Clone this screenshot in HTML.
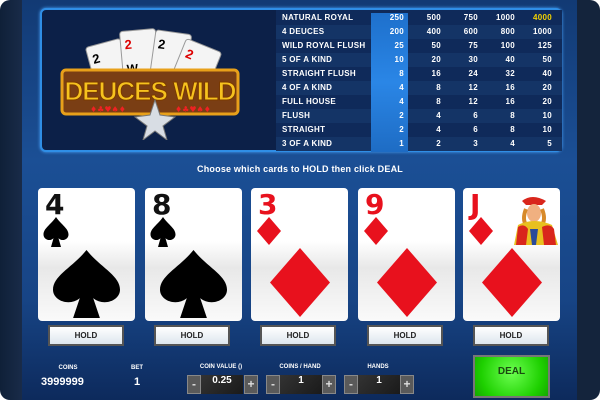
<!DOCTYPE html>
<html><head><meta charset="utf-8"><style>
*{margin:0;padding:0;box-sizing:border-box}
body{width:600px;height:400px;overflow:hidden;background:#fff;font-family:"Liberation Sans",sans-serif;font-weight:bold;color:#fff}
#root{position:absolute;left:0;top:0;width:600px;height:400px;border-radius:10px;overflow:hidden;background:linear-gradient(90deg,#0f2038,#1a2c4a 4%,#14243c)}
#main{position:absolute;left:22px;top:0;width:555px;height:400px;background:linear-gradient(180deg,#123a74 0%,#1b4f95 40%,#174485 75%,#0d2a5c 100%)}
#top{position:absolute;left:40px;top:8px;width:522px;height:144px;border:2px solid #2f8ee6;border-radius:6px;background:#0c2048;box-shadow:0 0 3px #4aa6ff}
#pt{position:absolute;left:276px;top:10px;width:286px;height:140px;background:#0f2a5a}
.row{position:absolute;left:0;width:286px;height:14px;font-size:8px;line-height:14px;letter-spacing:0.3px}
.row span{position:absolute;top:0;z-index:2}
.row .l{left:6px}
.hl{position:absolute;left:95px;top:3px;width:37px;height:139px;background:linear-gradient(180deg,#1e70cc,#2a86e6 50%,#1e6cc4);z-index:1}
.n{text-align:right;width:30px}
.card{position:absolute;top:188px;width:97px;height:133px;background:linear-gradient(180deg,#fff 40%,#e8e8e8 60%,#fafafa);border-radius:4px}
.rk{position:absolute;left:7px;top:0px;font-size:28px;font-family:"DejaVu Sans",sans-serif;font-weight:bold;color:#111}
.hold{position:absolute;top:325px;width:76px;height:21px;background:linear-gradient(180deg,#fff,#dde6ee);border:2px solid #555;color:#222;font-size:8px;text-align:center;line-height:17px}
.lbl{position:absolute;font-size:6px;text-align:center}
.btn{position:absolute;top:375px;width:14px;height:19px;background:#5a5a5a;border:1px solid #888;color:#ddd;font-size:12px;text-align:center;line-height:17px}
.box{position:absolute;top:375px;width:42px;height:19px;background:linear-gradient(135deg,#333,#1a1a1a);font-size:10px;text-align:center;line-height:12px}
</style></head><body><div id="root">
<div id="main"></div>
<div id="top"></div>
<svg style="position:absolute;left:60px;top:20px" width="180" height="120" viewBox="0 0 180 120">
<g transform="rotate(-15 50 50)"><rect x="32" y="22" width="36" height="48" rx="3" fill="#f4f4f4" stroke="#999"/><text x="36" y="40" font-size="13" font-family="Liberation Sans" font-weight="bold">2</text></g>
<g transform="rotate(-5 80 40)"><rect x="62" y="10" width="36" height="50" rx="3" fill="#f4f4f4" stroke="#999"/><text x="66" y="28" font-size="13" fill="#d00" font-family="Liberation Sans" font-weight="bold">2</text><text x="66" y="52" font-size="12" font-family="Liberation Sans" font-weight="bold">W</text></g>
<g transform="rotate(8 110 40)"><rect x="92" y="12" width="36" height="50" rx="3" fill="#f4f4f4" stroke="#999"/><text x="96" y="30" font-size="13" font-family="Liberation Sans" font-weight="bold">2</text></g>
<g transform="rotate(22 130 50)"><rect x="115" y="22" width="38" height="50" rx="3" fill="#f4f4f4" stroke="#999"/><text x="120" y="40" font-size="13" fill="#d00" font-family="Liberation Sans" font-weight="bold">2</text><text x="118" y="62" font-size="11" font-family="Liberation Sans" font-weight="bold">WILD</text></g>
<rect x="2" y="50" width="176" height="44" rx="4" fill="#7a3e14" stroke="#e8a01a" stroke-width="3"/>
<text x="90" y="80" text-anchor="middle" font-size="26" fill="#f6c21e" stroke="#7a3a00" stroke-width="1" font-family="Liberation Sans" font-weight="bold" letter-spacing="-1">DEUCES WILD</text>
<text x="30" y="92" font-size="8" fill="#e22" font-family="DejaVu Sans">♦♣♥♠♦</text><text x="115" y="92" font-size="8" fill="#e22" font-family="DejaVu Sans">♦♣♥♠♦</text>
<polygon points="95,80 100,95 115,97 103,106 107,120 95,111 83,120 87,106 75,97 90,95" fill="#d8dde4" stroke="#777"/>
</svg>
<div id="pt">
<div class="hl"></div>
<div class="row" style="top:1px"><span class="l">NATURAL ROYAL</span><span class="n" style="left:98px">250</span><span class="n" style="left:135px">500</span><span class="n" style="left:172px">750</span><span class="n" style="left:209px">1000</span><span class="n" style="left:246px;color:#f2d200">4000</span></div>
<div class="row" style="top:15px;background:#143466"><span class="l">4 DEUCES</span><span class="n" style="left:98px">200</span><span class="n" style="left:135px">400</span><span class="n" style="left:172px">600</span><span class="n" style="left:209px">800</span><span class="n" style="left:246px">1000</span></div>
<div class="row" style="top:29px"><span class="l">WILD ROYAL FLUSH</span><span class="n" style="left:98px">25</span><span class="n" style="left:135px">50</span><span class="n" style="left:172px">75</span><span class="n" style="left:209px">100</span><span class="n" style="left:246px">125</span></div>
<div class="row" style="top:43px;background:#143466"><span class="l">5 OF A KIND</span><span class="n" style="left:98px">10</span><span class="n" style="left:135px">20</span><span class="n" style="left:172px">30</span><span class="n" style="left:209px">40</span><span class="n" style="left:246px">50</span></div>
<div class="row" style="top:57px"><span class="l">STRAIGHT FLUSH</span><span class="n" style="left:98px">8</span><span class="n" style="left:135px">16</span><span class="n" style="left:172px">24</span><span class="n" style="left:209px">32</span><span class="n" style="left:246px">40</span></div>
<div class="row" style="top:71px;background:#143466"><span class="l">4 OF A KIND</span><span class="n" style="left:98px">4</span><span class="n" style="left:135px">8</span><span class="n" style="left:172px">12</span><span class="n" style="left:209px">16</span><span class="n" style="left:246px">20</span></div>
<div class="row" style="top:85px"><span class="l">FULL HOUSE</span><span class="n" style="left:98px">4</span><span class="n" style="left:135px">8</span><span class="n" style="left:172px">12</span><span class="n" style="left:209px">16</span><span class="n" style="left:246px">20</span></div>
<div class="row" style="top:99px;background:#143466"><span class="l">FLUSH</span><span class="n" style="left:98px">2</span><span class="n" style="left:135px">4</span><span class="n" style="left:172px">6</span><span class="n" style="left:209px">8</span><span class="n" style="left:246px">10</span></div>
<div class="row" style="top:113px"><span class="l">STRAIGHT</span><span class="n" style="left:98px">2</span><span class="n" style="left:135px">4</span><span class="n" style="left:172px">6</span><span class="n" style="left:209px">8</span><span class="n" style="left:246px">10</span></div>
<div class="row" style="top:127px;background:#143466"><span class="l">3 OF A KIND</span><span class="n" style="left:98px">1</span><span class="n" style="left:135px">2</span><span class="n" style="left:172px">3</span><span class="n" style="left:209px">4</span><span class="n" style="left:246px">5</span></div>
</div>
<div style="position:absolute;left:0;width:600px;top:164px;text-align:center;font-size:9px;letter-spacing:0.2px">Choose which cards to HOLD then click DEAL</div>

<div class="card" style="left:38px"><div class="rk">4</div><svg style="position:absolute;left:5px;top:29px" width="26" height="30" viewBox="0 0 20 24"><path d="M10 0C6 6 0 9 0 14c0 4 5 6 8 3l-2 7h8l-2-7c3 3 8 1 8-3 0-5-6-8-10-14z"/></svg><svg style="position:absolute;left:15px;top:62px" width="67" height="68" viewBox="0 0 20 24" preserveAspectRatio="none"><path d="M10 0C6 6 0 9 0 14c0 4 5 6 8 3l-2 7h8l-2-7c3 3 8 1 8-3 0-5-6-8-10-14z"/></svg></div>
<div class="card" style="left:145px"><div class="rk">8</div><svg style="position:absolute;left:5px;top:29px" width="26" height="30" viewBox="0 0 20 24"><path d="M10 0C6 6 0 9 0 14c0 4 5 6 8 3l-2 7h8l-2-7c3 3 8 1 8-3 0-5-6-8-10-14z"/></svg><svg style="position:absolute;left:15px;top:62px" width="67" height="68" viewBox="0 0 20 24" preserveAspectRatio="none"><path d="M10 0C6 6 0 9 0 14c0 4 5 6 8 3l-2 7h8l-2-7c3 3 8 1 8-3 0-5-6-8-10-14z"/></svg></div>
<div class="card" style="left:251px"><div class="rk" style="color:#e8111d">3</div><svg style="position:absolute;left:6px;top:29px" width="24" height="28" viewBox="0 0 20 24" preserveAspectRatio="none"><path d="M10 0L20 12 10 24 0 12z" fill="#e8111d"/></svg><svg style="position:absolute;left:19px;top:60px" width="60" height="69" viewBox="0 0 20 24" preserveAspectRatio="none"><path d="M10 0L20 12 10 24 0 12z" fill="#e8111d"/></svg></div>
<div class="card" style="left:358px"><div class="rk" style="color:#e8111d">9</div><svg style="position:absolute;left:6px;top:29px" width="24" height="28" viewBox="0 0 20 24" preserveAspectRatio="none"><path d="M10 0L20 12 10 24 0 12z" fill="#e8111d"/></svg><svg style="position:absolute;left:19px;top:60px" width="60" height="69" viewBox="0 0 20 24" preserveAspectRatio="none"><path d="M10 0L20 12 10 24 0 12z" fill="#e8111d"/></svg></div>
<div class="card" style="left:463px"><div class="rk" style="color:#e8111d">J</div><svg style="position:absolute;left:6px;top:29px" width="24" height="28" viewBox="0 0 20 24" preserveAspectRatio="none"><path d="M10 0L20 12 10 24 0 12z" fill="#e8111d"/></svg><svg style="position:absolute;left:19px;top:60px" width="60" height="69" viewBox="0 0 20 24" preserveAspectRatio="none"><path d="M10 0L20 12 10 24 0 12z" fill="#e8111d"/></svg>
<svg style="position:absolute;left:49px;top:7px" width="46" height="50" viewBox="0 0 46 50"><path d="M10 6 Q20 -2 34 6 L30 10 H14z" fill="#d9261c"/><ellipse cx="22" cy="18" rx="7" ry="9" fill="#f0b080"/><path d="M14 14 Q10 24 14 30 M30 14 Q34 24 30 30" stroke="#d88a2a" stroke-width="4" fill="none"/><path d="M2 50 L6 30 Q22 22 40 30 L46 50z" fill="#e8c020"/><path d="M6 32 Q12 28 16 34 L14 50 H4z M30 32 Q38 28 42 34 L44 50 H32z" fill="#d9261c"/><path d="M18 34 L26 34 L24 50 H20z" fill="#2a4a9a"/></svg></div>

<div class="hold" style="left:48px">HOLD</div>
<div class="hold" style="left:154px">HOLD</div>
<div class="hold" style="left:260px">HOLD</div>
<div class="hold" style="left:367px">HOLD</div>
<div class="hold" style="left:473px">HOLD</div>

<div class="lbl" style="left:48px;top:365px;width:40px">COINS</div>
<div style="position:absolute;left:41px;top:376px;font-size:11px">3999999</div>
<div class="lbl" style="left:125px;top:365px;width:24px">BET</div>
<div style="position:absolute;left:134px;top:376px;font-size:11px">1</div>
<div class="lbl" style="left:186px;top:364px;width:70px">COIN VALUE ()</div>
<div class="lbl" style="left:265px;top:364px;width:70px">COINS / HAND</div>
<div class="lbl" style="left:343px;top:364px;width:70px">HANDS</div>
<div class="btn" style="left:187px">-</div><div class="box" style="left:201px">0.25</div><div class="btn" style="left:244px">+</div>
<div class="btn" style="left:266px">-</div><div class="box" style="left:280px">1</div><div class="btn" style="left:322px">+</div>
<div class="btn" style="left:344px">-</div><div class="box" style="left:358px">1</div><div class="btn" style="left:400px">+</div>
<div style="position:absolute;left:473px;top:355px;width:77px;height:43px;background:radial-gradient(circle at 50% 40%,#6cff50,#1ed000 70%,#15a800);border:2px solid #777;color:#1a4a10;font-size:10px;text-align:center;line-height:30px">DEAL</div>
</div></body></html>
